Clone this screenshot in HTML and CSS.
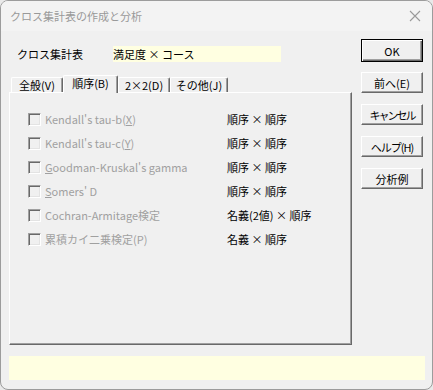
FILE: index.html
```html
<!DOCTYPE html>
<html lang="ja">
<head>
    <meta charset="UTF-8">
    <link rel="stylesheet" href="styles.css">
    <title>クロス集計表の作成と分析</title>
</head>
<body>
    <div class="window">
        <div class="titlebar">
            <span class="title">クロス集計表の作成と分析</span>
            <svg class="close" width="12" height="12" viewBox="0 0 12 12">
                <path d="M1 1 L11 11 M11 1 L1 11" stroke="#9a9a9a" stroke-width="1.1" fill="none"/>
            </svg>
        </div>

        <div class="client">
            <div class="main">
                <div class="left">
                    <div class="target">
                        <span class="target-label">クロス集計表</span>
                        <span class="target-field">満足度 × コース</span>
                    </div>

                    <div class="tabs">
                        <div class="tab tab-general">全般(V)</div>
                        <div class="tab tab-active">順序(B)</div>
                        <div class="tab tab-2x2">2×2(D)</div>
                        <div class="tab tab-other">その他(J)</div>
                    </div>

                    <div class="panel">
                        <div class="row">
                            <label class="check"><span class="box"></span><span>Kendall's tau-b(<u>X</u>)</span></label>
                            <span class="kind">順序 × 順序</span>
                        </div>
                        <div class="row">
                            <label class="check"><span class="box"></span><span>Kendall's tau-c(<u>Y</u>)</span></label>
                            <span class="kind">順序 × 順序</span>
                        </div>
                        <div class="row">
                            <label class="check"><span class="box"></span><span><u>G</u>oodman-Kruskal's gamma</span></label>
                            <span class="kind">順序 × 順序</span>
                        </div>
                        <div class="row">
                            <label class="check"><span class="box"></span><span><u>S</u>omers' D</span></label>
                            <span class="kind">順序 × 順序</span>
                        </div>
                        <div class="row">
                            <label class="check"><span class="box"></span><span>Cochran-Armitage検定</span></label>
                            <span class="kind">名義(2値) × 順序</span>
                        </div>
                        <div class="row">
                            <label class="check"><span class="box"></span><span>累積カイ二乗検定(P)</span></label>
                            <span class="kind">名義 × 順序</span>
                        </div>
                    </div>
                </div>

                <div class="buttons">
                    <button class="btn btn-default">OK</button>
                    <button class="btn">前へ(E)</button>
                    <button class="btn btn-narrow">キャンセル</button>
                    <button class="btn btn-narrow-1">ヘルプ(H)</button>
                    <button class="btn">分析例</button>
                </div>
            </div>

            <div class="status"></div>
        </div>
    </div>
</body>
</html>
```

FILE: styles.css
```css
html {
    background: #e9e9e9;
}

body {
    margin: 0;
    padding: 0;
    font-family: "Noto Sans CJK JP", "Noto Sans", sans-serif;
    font-size: 11px;
    color: #000;
}

.window {
    width: 433px;
    height: 390px;
    box-sizing: border-box;
    border: 1px solid #9c9c9c;
    border-radius: 8px;
    background: #f0f0f0;
    overflow: hidden;
    display: flex;
    flex-direction: column;
}

.titlebar {
    height: 30px;
    flex: none;
    display: flex;
    align-items: center;
    justify-content: space-between;
    padding: 0 11px 0 9px;
    background: #f3f3f3;
}

.title {
    color: #999;
    font-size: 11px;
}

.close {
    display: block;
}

.client {
    flex: 1;
    padding: 8px 7px 0 8px;
}

.main {
    display: flex;
    gap: 9px;
}

.left {
    width: 343px;
    display: flex;
    flex-direction: column;
}

/* target row */
.target {
    display: flex;
    align-items: center;
    height: 16px;
    margin-top: 7px;
    padding-left: 8px;
}

.target-label {
    width: 96px;
}

.target-field {
    width: 168px;
    height: 16px;
    line-height: 16px;
    background: #ffffe1;
}

/* tabs */
.tabs {
    display: flex;
    align-items: flex-end;
    height: 17px;
    margin-top: 13px;
    padding-left: 2px;
}

.tab {
    height: 15px;
    line-height: 14px;
    box-sizing: border-box;
    text-align: center;
    border-top: 1px solid #fff;
    border-left: 1px solid #fff;
    border-right: 1px solid #696969;
    box-shadow: inset -1px 0 0 #a0a0a0;
    border-radius: 2px 2px 0 0;
}

.tab-general { width: 52px; }
.tab-2x2 { width: 52px; }
.tab-other { width: 58px; }

.tab-active {
    width: 55px;
    height: 18px;
    margin-bottom: -1px;
    line-height: 15px;
    background: #f0f0f0;
    position: relative;
}

/* panel */
.panel {
    height: 253px;
    box-sizing: border-box;
    border-top: 1px solid #fff;
    border-left: 1px solid #fff;
    border-right: 1px solid #696969;
    border-bottom: 1px solid #696969;
    box-shadow: inset -1px -1px 0 #a0a0a0;
    padding: 14px 0 0 18px;
}

.row {
    display: flex;
    align-items: center;
    height: 24px;
}

.check {
    width: 199px;
    display: flex;
    align-items: center;
    gap: 4px;
    color: #a0a0a0;
}

.box {
    width: 13px;
    height: 13px;
    box-sizing: border-box;
    border-top: 1px solid #a0a0a0;
    border-left: 1px solid #a0a0a0;
    border-right: 1px solid #fff;
    border-bottom: 1px solid #fff;
    box-shadow: inset 1px 1px 0 #696969, inset -1px -1px 0 #e3e3e3;
    background: #f0f0f0;
    flex: none;
}

.check u {
    text-underline-offset: 1px;
}

/* buttons */
.buttons {
    width: 62px;
    display: flex;
    flex-direction: column;
    gap: 11px;
}

.btn {
    height: 21px;
    padding: 0;
    box-sizing: border-box;
    font-family: inherit;
    font-size: 11px;
    color: #000;
    background: #f0f0f0;
    border-top: 1px solid #fff;
    border-left: 1px solid #fff;
    border-right: 1px solid #696969;
    border-bottom: 1px solid #696969;
    box-shadow: inset -1px -1px 0 #a0a0a0;
    border-radius: 0;
}

.btn-narrow {
    letter-spacing: -2px;
}

.btn-narrow-1 {
    letter-spacing: -1px;
}

.btn-default {
    height: 23px;
    margin-bottom: -1px;
    border: 1px solid #000;
    box-shadow: inset 1px 1px 0 #fff, inset -1px -1px 0 #696969, inset -2px -2px 0 #a0a0a0;
}

/* status bar */
.status {
    width: 416px;
    height: 24px;
    margin-top: 11px;
    background: #ffffe1;
}
```
